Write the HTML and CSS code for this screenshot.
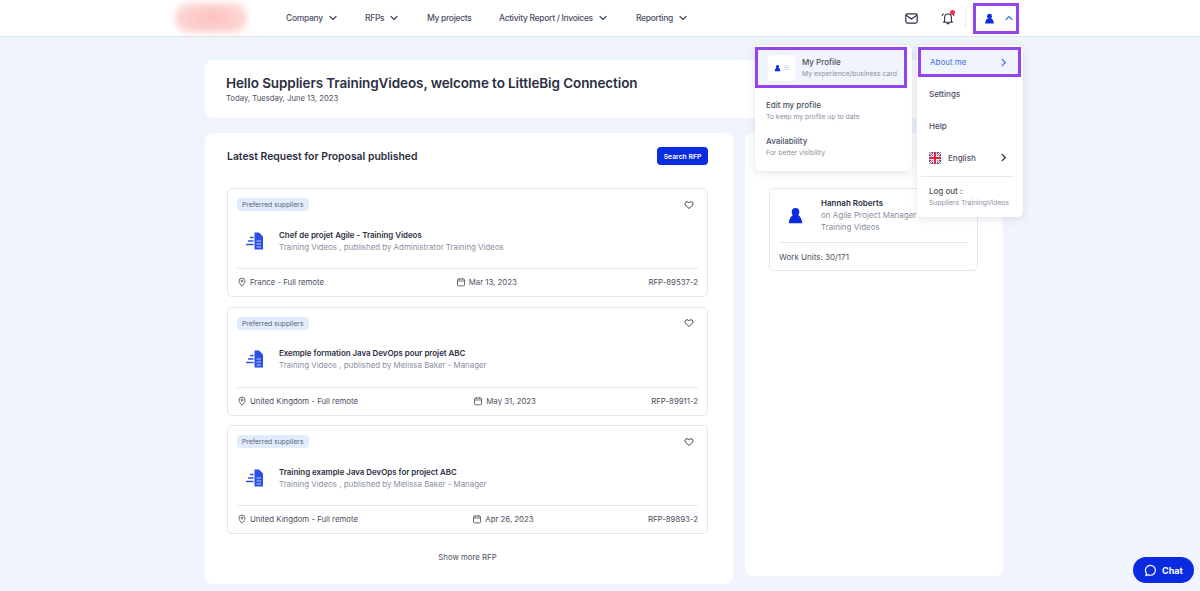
FILE: index.html
```html
<!DOCTYPE html>
<html lang="en">
<head>
    <meta charset="UTF-8">
    <meta name="viewport" content="width=device-width, initial-scale=1.0">
    <title>LittleBig Connection</title>
    <link rel="stylesheet" href="styles.css">
</head>
<body>
    <svg class="defs" width="0" height="0">
        <symbol id="chev-down" viewBox="0 0 10 10"><path d="M2 3.5 5 6.5 8 3.5" fill="none" stroke="currentColor" stroke-width="1.3" stroke-linecap="round" stroke-linejoin="round"/></symbol>
        <symbol id="chev-right" viewBox="0 0 10 10"><path d="M3.5 1.5 7 5 3.5 8.5" fill="none" stroke="currentColor" stroke-width="1.4" stroke-linecap="round" stroke-linejoin="round"/></symbol>
        <symbol id="person" viewBox="0 0 16 16"><circle cx="8" cy="4.6" r="3.6" fill="currentColor"/><path d="M5.6 7.6C3.4 9 2 11.5 1.6 15.4h12.8C14 11.5 12.6 9 10.4 7.6Z" fill="currentColor"/></symbol>
        <symbol id="heart" viewBox="0 0 12 12"><path d="M6 10.3 1.9 6.2a2.4 2.4 0 0 1 3.4-3.4l.7.7.7-.7a2.4 2.4 0 0 1 3.4 3.4Z" fill="none" stroke="currentColor" stroke-width="1.1" stroke-linejoin="round"/></symbol>
        <symbol id="pin" viewBox="0 0 12 12"><path d="M6 11C4 9 2.4 7.2 2.4 4.9a3.6 3.6 0 0 1 7.2 0C9.6 7.2 8 9 6 11Z" fill="none" stroke="currentColor" stroke-width="1"/><circle cx="6" cy="4.8" r="1.2" fill="none" stroke="currentColor" stroke-width="1"/></symbol>
        <symbol id="calendar" viewBox="0 0 12 12"><rect x="1.8" y="2.4" width="8.4" height="8.2" rx="1.2" fill="none" stroke="currentColor" stroke-width="1"/><path d="M1.8 4.8h8.4M4 1.2v2M8 1.2v2" fill="none" stroke="currentColor" stroke-width="1"/></symbol>
        <symbol id="doc" viewBox="0 0 18 18"><path d="M8.500 .5h4.500L17 4.500v13H8.500Z" fill="#2b50e8"/><path d="M10.500 9h4.500M10.500 12h4.500M10.500 15h4.500" stroke="#cdd8fb" stroke-width=".9"/><path d="M4.500 5.500H7M2.500 9H7M.5 12.500H7" stroke="#2b50e8" stroke-width="1.400" stroke-linecap="round"/></symbol>
    </svg>

    <header class="topbar">
        <div class="logo"></div>
        <nav class="nav">
            <a class="nav-company">Company <svg class="chev"><use href="#chev-down"/></svg></a>
            <a class="nav-rfps">RFPs <svg class="chev"><use href="#chev-down"/></svg></a>
            <a class="nav-projects">My projects</a>
            <a class="nav-activity">Activity Report / Invoices <svg class="chev"><use href="#chev-down"/></svg></a>
            <a class="nav-reporting">Reporting <svg class="chev"><use href="#chev-down"/></svg></a>
        </nav>
        <div class="top-icons">
            <svg class="icon-mail" viewBox="0 0 14 12"><rect x=".8" y="1" width="12.400" height="10" rx="1.600" fill="none" stroke="#2b2f42" stroke-width="1.300"/><path d="M1.200 2.500 7 6.600l5.800-4.100" fill="none" stroke="#2b2f42" stroke-width="1.300"/></svg>
            <span class="bell">
                <svg class="icon-bell" viewBox="0 0 14 14"><path d="M3.600 10.200V6.400a3.400 3.400 0 0 1 6.800 0v3.800l1 1H2.600ZM6 12.600h2M1.200 4.400 2.400 3M12.800 4.400 11.600 3" fill="none" stroke="#2b2f42" stroke-width="1.100" stroke-linecap="round" stroke-linejoin="round"/></svg>
                <i class="dot"></i>
            </span>
            <span class="user-box highlight">
                <svg class="icon-user"><use href="#person"/></svg>
                <svg class="chev-up" viewBox="0 0 10 10"><path d="M2 6.500 5 3.500 8 6.500" fill="none" stroke="currentColor" stroke-width="1.300" stroke-linecap="round" stroke-linejoin="round"/></svg>
            </span>
        </div>
    </header>

    <main class="page">
        <section class="panel hello">
            <h1>Hello Suppliers TrainingVideos, welcome to LittleBig Connection</h1>
            <p>Today, Tuesday, June 13, 2023</p>
        </section>

        <div class="columns">
            <section class="panel rfps">
                <div class="rfps-head">
                    <h2>Latest Request for Proposal published</h2>
                    <button class="search-btn">Search RFP</button>
                </div>

                <article class="rfp-card">
                    <div class="rfp-top">
                        <span class="tag">Preferred suppliers</span>
                        <svg class="heart"><use href="#heart"/></svg>
                    </div>
                    <div class="rfp-body">
                        <svg class="doc"><use href="#doc"/></svg>
                        <div>
                            <h3>Chef de projet Agile - Training Videos</h3>
                            <p>Training Videos , published by Administrator Training Videos</p>
                        </div>
                    </div>
                    <div class="rfp-foot">
                        <span><svg class="meta-icon"><use href="#pin"/></svg>France - Full remote</span>
                        <span><svg class="meta-icon"><use href="#calendar"/></svg>Mar 13, 2023</span>
                        <span>RFP-89537-2</span>
                    </div>
                </article>

                <article class="rfp-card">
                    <div class="rfp-top">
                        <span class="tag">Preferred suppliers</span>
                        <svg class="heart"><use href="#heart"/></svg>
                    </div>
                    <div class="rfp-body">
                        <svg class="doc"><use href="#doc"/></svg>
                        <div>
                            <h3>Exemple formation Java DevOps pour projet ABC</h3>
                            <p>Training Videos , published by Melissa Baker - Manager</p>
                        </div>
                    </div>
                    <div class="rfp-foot">
                        <span><svg class="meta-icon"><use href="#pin"/></svg>United Kingdom - Full remote</span>
                        <span><svg class="meta-icon"><use href="#calendar"/></svg>May 31, 2023</span>
                        <span>RFP-89911-2</span>
                    </div>
                </article>

                <article class="rfp-card">
                    <div class="rfp-top">
                        <span class="tag">Preferred suppliers</span>
                        <svg class="heart"><use href="#heart"/></svg>
                    </div>
                    <div class="rfp-body">
                        <svg class="doc"><use href="#doc"/></svg>
                        <div>
                            <h3>Training example Java DevOps for project ABC</h3>
                            <p>Training Videos , published by Melissa Baker - Manager</p>
                        </div>
                    </div>
                    <div class="rfp-foot">
                        <span><svg class="meta-icon"><use href="#pin"/></svg>United Kingdom - Full remote</span>
                        <span><svg class="meta-icon"><use href="#calendar"/></svg>Apr 26, 2023</span>
                        <span>RFP-89893-2</span>
                    </div>
                </article>

                <div class="show-more">Show more RFP</div>
            </section>

            <aside class="panel side">
                <div class="person-card">
                    <div class="person-top">
                        <svg class="person-icon"><use href="#person"/></svg>
                        <div>
                            <h4>Hannah Roberts</h4>
                            <p>on Agile Project Manager</p>
                            <p>Training Videos</p>
                        </div>
                    </div>
                    <div class="person-foot">Work Units: 30/171</div>
                </div>
            </aside>
        </div>
    </main>

    <div class="menu menu-profile">
        <div class="menu-first highlight">
            <span class="card-thumb">
                <svg class="thumb-user"><use href="#person"/></svg>
                <svg class="thumb-lines" viewBox="0 0 8 8"><path d="M1 2h6M1 4h6M1 6h6" stroke="#c4cde6" stroke-width=".9"/></svg>
            </span>
            <div>
                <b>My Profile</b>
                <small>My experience/business card</small>
            </div>
        </div>
        <div class="menu-row">
            <b>Edit my profile</b>
            <small>To keep my profile up to date</small>
        </div>
        <div class="menu-row">
            <b>Availability</b>
            <small>For better visibility</small>
        </div>
    </div>

    <div class="menu menu-account">
        <div class="about highlight">About me <svg class="chev-r"><use href="#chev-right"/></svg></div>
        <div class="account-row">Settings</div>
        <div class="account-row">Help</div>
        <div class="account-row lang">
            <svg class="flag" viewBox="0 0 12 12">
                <rect width="12" height="12" fill="#2b4aa8"/>
                <path d="M0 0 12 12M12 0 0 12" stroke="#fff" stroke-width="2.200"/>
                <path d="M0 0 12 12M12 0 0 12" stroke="#e0263c" stroke-width=".8"/>
                <path d="M6 0v12M0 6h12" stroke="#fff" stroke-width="3.600"/>
                <path d="M6 0v12M0 6h12" stroke="#e0263c" stroke-width="2.200"/>
            </svg>
            English
            <svg class="chev-r"><use href="#chev-right"/></svg>
        </div>
        <div class="logout">
            <b>Log out :</b>
            <small>Suppliers TrainingVideos</small>
        </div>
    </div>

    <button class="chat">
        <svg viewBox="0 0 14 14"><path d="M7 1.500a5.300 5.300 0 0 1 0 10.600c-.9 0-1.700-.2-2.400-.6L2 12.600l.7-2.600A5.300 5.300 0 0 1 7 1.500Z" fill="none" stroke="#fff" stroke-width="1.300" stroke-linejoin="round"/></svg>
        Chat
    </button>
</body>
</html>
```

FILE: styles.css
```css
:root {
    --blue: #0a2be0;
    --ink: #2b2f42;
    --grey: #8a8fa2;
    --line: #e6e8f0;
    --purple: #9245ee;
}

* {
    box-sizing: border-box;
}

body {
    margin: 0;
    height: 591px;
    overflow: hidden;
    background: #f0f4fc;
    color: var(--ink);
    font-family: Inter, "Noto Sans", sans-serif;
}

h1, h2, h3, h4, p {
    margin: 0;
}

.defs {
    position: absolute;
}

.highlight {
    border: 3px solid var(--purple);
}

/* top bar */
.topbar {
    display: flex;
    align-items: center;
    height: 37px;
    padding-left: 175px;
    background: #fff;
    border-bottom: 1px solid #dfe3ec;
}

.logo {
    width: 72px;
    height: 30px;
    margin-right: 39px;
    border-radius: 14px;
    background: radial-gradient(ellipse at 50% 50%, #fbbfbc, #fde2df);
    filter: blur(3px);
}

.nav {
    display: flex;
    color: #4b4f62;
    font-size: 8.5px;
    font-weight: 500;
    letter-spacing: -.3px;
}

.nav a {
    display: flex;
    align-items: center;
    gap: 5px;
}

.nav-company { width: 79px; }
.nav-rfps { width: 62px; }
.nav-projects { width: 72px; }
.nav-activity { width: 137px; }
.nav-reporting { width: 60px; }

.chev {
    width: 10px;
    height: 10px;
}

.top-icons {
    display: flex;
    align-items: center;
    margin-left: 209px;
}

.icon-mail {
    width: 13px;
    height: 11px;
    margin-right: 23px;
}

.bell {
    position: relative;
    display: flex;
    margin-right: 18px;
}

.bell::after {
    content: "";
    position: absolute;
    top: -3px;
    right: -11px;
    width: 1px;
    height: 20px;
    background: #e8ebf3;
}

.icon-bell {
    width: 14px;
    height: 14px;
}

.dot {
    position: absolute;
    top: -1px;
    right: 0;
    width: 5px;
    height: 5px;
    border-radius: 50%;
    background: #f0343c;
}

.user-box {
    display: flex;
    align-items: center;
    width: 46px;
    height: 31px;
    padding-left: 8px;
}

.icon-user {
    width: 11px;
    height: 11px;
    color: var(--blue);
}

.chev-up {
    width: 10px;
    height: 10px;
    margin-left: 9px;
    color: #4a7fd8;
}

/* page */
.page {
    width: 798px;
    margin: 23px 0 0 205px;
}

.panel {
    background: #fff;
    border-radius: 8px;
}

.hello {
    height: 58px;
    padding: 15px 21px 0;
}

.hello h1 {
    font-size: 13.5px;
    font-weight: 600;
    line-height: 17px;
    letter-spacing: -.1px;
}

.hello p {
    font-size: 7.7px;
    line-height: 13px;
    color: #4b4f62;
}

.columns {
    display: flex;
    gap: 12px;
    margin-top: 15px;
}

.rfps {
    width: 528px;
    height: 451px;
    padding: 14px 25px 0 22px;
}

.rfps-head {
    display: flex;
    justify-content: space-between;
    align-items: center;
    height: 18px;
    margin-bottom: 23px;
}

.rfps-head h2 {
    font-size: 10.4px;
    font-weight: 600;
}

.search-btn {
    width: 51px;
    height: 18px;
    padding: 0;
    border: none;
    border-radius: 4px;
    background: var(--blue);
    color: #fff;
    font-family: inherit;
    font-size: 6.8px;
    font-weight: 600;
}

.rfp-card {
    height: 109px;
    margin-bottom: 9.5px;
    padding: 9px 9px 0;
    border: 1px solid var(--line);
    border-radius: 5px;
}

.rfp-top {
    display: flex;
    justify-content: space-between;
    align-items: center;
    height: 13px;
}

.tag {
    padding: 0 5px;
    border-radius: 4px;
    background: #e1ecfc;
    color: #5a6074;
    font-size: 6.8px;
    line-height: 13px;
}

.heart {
    width: 10px;
    height: 10px;
    margin-right: 4px;
    color: var(--ink);
}

.rfp-body {
    display: flex;
    align-items: center;
    height: 58px;
    padding-top: 2px;
    border-bottom: 1px solid var(--line);
}

.doc {
    width: 18px;
    height: 18px;
    margin: 0 15px 0 9px;
    flex-shrink: 0;
}

.rfp-body h3 {
    font-size: 7.9px;
    font-weight: 600;
    line-height: 12px;
}

.rfp-body p {
    font-size: 7.9px;
    line-height: 12px;
    color: var(--grey);
}

.rfp-foot {
    display: flex;
    justify-content: space-between;
    align-items: center;
    height: 26px;
    font-size: 7.8px;
    color: #4b4f62;
}

.rfp-foot span {
    display: flex;
    align-items: center;
}

.meta-icon {
    width: 10px;
    height: 10px;
    margin-right: 3px;
}

.show-more {
    margin-top: 18px;
    text-align: center;
    font-size: 7.8px;
    color: #4b4f62;
}

.side {
    width: 258px;
    height: 443px;
    padding: 55px 25px 0 24px;
}

.person-card {
    height: 83px;
    padding: 0 9px;
    border: 1px solid var(--line);
    border-radius: 5px;
}

.person-top {
    display: flex;
    height: 54px;
    padding-top: 8px;
    border-bottom: 1px solid var(--line);
}

.person-icon {
    width: 17px;
    height: 19px;
    margin: 9px 17px 0 8px;
    color: var(--blue);
}

.person-top h4 {
    font-size: 8px;
    font-weight: 600;
    line-height: 12px;
}

.person-top p {
    font-size: 8px;
    line-height: 12px;
    color: var(--grey);
    white-space: nowrap;
}

.person-foot {
    font-size: 8px;
    line-height: 29px;
    color: #4b4f62;
}

/* dropdown menus */
.menu {
    position: absolute;
    top: 45px;
    background: #fff;
    border-radius: 6px;
    box-shadow: 0 2px 8px rgba(60, 70, 110, 0.14);
    font-size: 8px;
}

.menu b {
    display: block;
    font-weight: 500;
    line-height: 12px;
    color: #4b4f62;
}

.menu small {
    display: block;
    font-size: 6.8px;
    line-height: 11.5px;
    color: var(--grey);
}

.menu-profile {
    left: 755px;
    width: 157px;
    height: 126px;
}

.menu-first {
    display: flex;
    align-items: center;
    width: 152px;
    height: 41px;
    margin-top: 2px;
    background: #f0f4fc;
    white-space: nowrap;
}

.card-thumb {
    display: flex;
    align-items: center;
    justify-content: center;
    width: 27px;
    height: 26px;
    margin: 0 7px 0 10px;
    background: #fff;
    border-radius: 3px;
}

.thumb-user {
    width: 7px;
    height: 8px;
    color: var(--blue);
}

.thumb-lines {
    width: 7px;
    height: 7px;
    margin-left: 2px;
}

.menu-row {
    padding-left: 11px;
    height: 36px;
}

.menu-first + .menu-row {
    margin-top: 10.5px;
}

.menu-account {
    left: 917px;
    width: 106px;
    height: 172px;
}

.about {
    display: flex;
    align-items: center;
    justify-content: space-between;
    width: 103px;
    height: 30px;
    margin: 2px 0 0 1px;
    padding: 0 10px 0 9px;
    background: #f0f4fc;
    color: #4a6cf0;
}

.chev-r {
    width: 9px;
    height: 9px;
}

.account-row {
    display: flex;
    align-items: center;
    height: 32px;
    padding: 0 15px 0 12px;
    font-weight: 500;
    color: #4b4f62;
}

.about + .account-row {
    margin-top: 1px;
}

.lang {
    height: 31px;
}

.lang .chev-r {
    margin-left: auto;
    color: var(--ink);
}

.flag {
    width: 12px;
    height: 12px;
    margin-right: 7px;
}

.logout {
    margin: 3px 9px 0 4px;
    padding: 8px 0 0 8px;
    border-top: 1px solid var(--line);
}

/* chat */
.chat {
    position: absolute;
    left: 1133px;
    top: 557px;
    display: flex;
    align-items: center;
    justify-content: center;
    gap: 5px;
    width: 61px;
    height: 26px;
    padding: 0;
    border: none;
    border-radius: 13px;
    background: var(--blue);
    color: #fff;
    font-family: inherit;
    font-size: 9px;
    font-weight: 700;
}

.chat svg {
    width: 13px;
    height: 13px;
}
```
